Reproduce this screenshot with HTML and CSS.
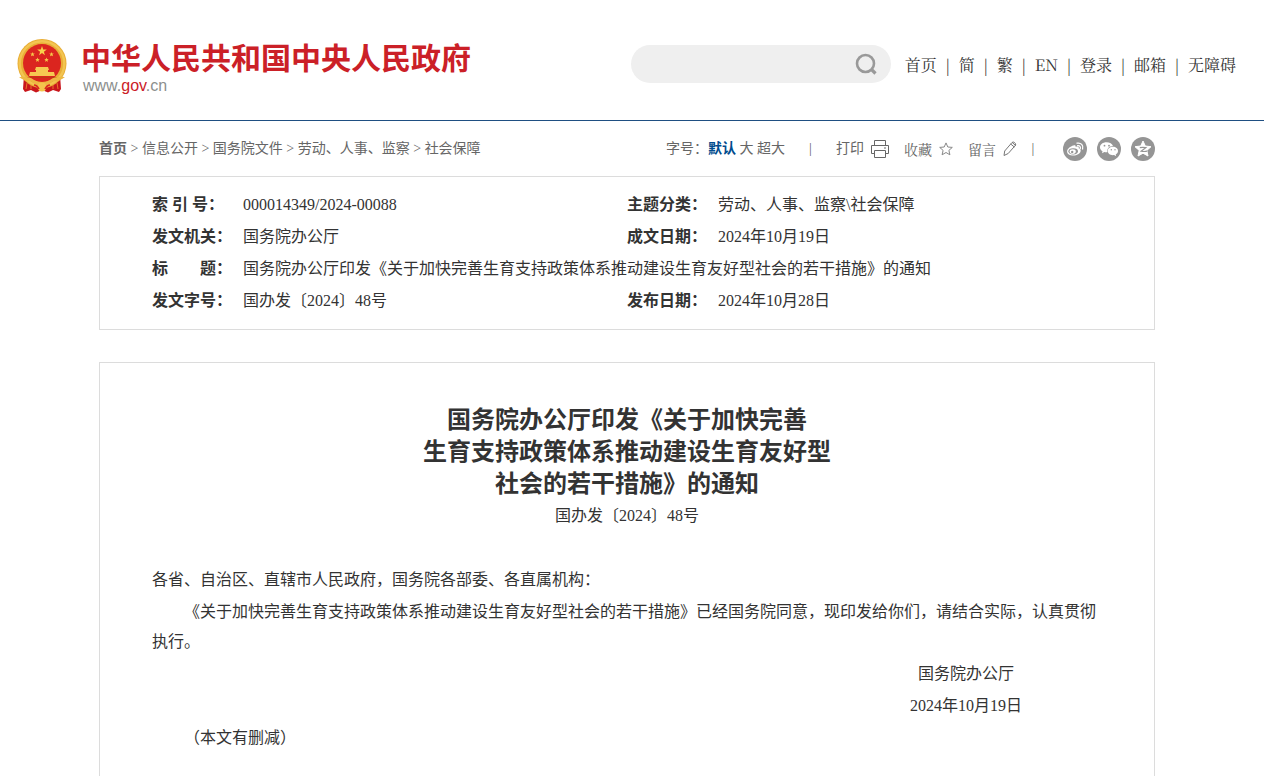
FILE: index.html
```html
<!DOCTYPE html>
<html lang="zh-CN">
<head>
<meta charset="utf-8">
<meta name="viewport" content="width=device-width, initial-scale=1">
<title>国务院办公厅印发《关于加快完善生育支持政策体系推动建设生育友好型社会的若干措施》的通知</title>
<link rel="stylesheet" href="styles.css">
</head>
<body>
<header class="header">
  <a class="brand" href="#">
    <svg class="emblem" viewBox="0 0 50 54" aria-hidden="true">
      <path d="M7 36 L6 50 L8 53 L14 51 L19 53.500 L25 51 L31 53.500 L36 51 L42 53 L44 50 L43 36Z" fill="#c9161c"/>
      <path d="M10 44 L9 50 M14 46 L14 50 M36 46 L36 50 M40 44 L41 50" stroke="#e8762a" stroke-width="1"/>
      <circle cx="25" cy="24.500" r="24.500" fill="#e9ae36"/>
      <circle cx="25" cy="24.500" r="22.300" fill="none" stroke="#f3c551" stroke-width="2.400"/>
      <circle cx="25" cy="24" r="19" fill="#db251f"/>
      <path d="M25 7l1.200 3.400 3.600.1-2.900 2.200 1 3.500-2.900-2.100-2.900 2.100 1-3.500-2.900-2.200 3.600-.1z" fill="#f8d34c"/>
      <g fill="#f5c84a">
        <path d="M15.500 13l.6 1.500 1.700.1-1.300 1 .5 1.700-1.500-.9-1.500.9.500-1.700-1.300-1 1.700-.1z"/>
        <path d="M34.500 13l.6 1.500 1.700.1-1.300 1 .5 1.700-1.500-.9-1.500.9.500-1.700-1.300-1 1.700-.1z"/>
        <path d="M20.500 18.500l.6 1.500 1.700.1-1.300 1 .5 1.700-1.500-.9-1.500.9.500-1.700-1.300-1 1.700-.1z"/>
        <path d="M29.500 18.500l.6 1.500 1.700.1-1.300 1 .5 1.700-1.500-.9-1.500.9.500-1.700-1.300-1 1.700-.1z"/>
      </g>
      <path d="M19 28h12l1 3H18zM19 31h12v3H19zM13 33h24l1 4H12z" fill="#f6c851"/>
      <path d="M10 38.500h30" stroke="#bc3b12"/>
      <path d="M2 38 Q12 37 17 41 Q25 46 33 41 Q38 37 48 38 Q42 43 36 42 Q33 44 30 47 Q25 51 20 47 Q17 44 14 42 Q8 43 2 38Z" fill="#edb843"/>
      <circle cx="25" cy="48" r="4.500" fill="#f4c44d"/>
      <path d="M17 46q3 0 5 4M33 46q-3 0-5 4" fill="none" stroke="#db251f" stroke-width="1.600"/>
    </svg>
    <span class="brand-text">
      <span class="brand-name">中华人民共和国中央人民政府</span>
      <span class="brand-url">www.<span class="brand-gov">gov</span>.cn</span>
    </span>
  </a>
  <div class="header-tools">
    <form class="search" role="search">
      <input class="search-input" type="search" aria-label="搜索">
      <button class="search-button" type="button" aria-label="搜索">
        <svg width="22" height="22" viewBox="0 0 22 22" fill="none" stroke="#999" stroke-width="2.600" aria-hidden="true"><circle cx="10.500" cy="10.500" r="8.500"/><path d="M16.500 16.500l4 4" stroke-width="3.200"/></svg>
      </button>
    </form>
    <nav class="top-nav">
      <a href="#">首页</a><span class="bar">|</span><a href="#">简</a><span class="bar">|</span><a href="#">繁</a><span class="bar">|</span><a href="#">EN</a><span class="bar">|</span><a href="#">登录</a><span class="bar">|</span><a href="#">邮箱</a><span class="bar">|</span><a href="#">无障碍</a>
    </nav>
  </div>
</header>

<main class="page">
  <div class="toolbar">
    <nav class="crumbs"><a class="home" href="#">首页</a> &gt; <a href="#">信息公开</a> &gt; <a href="#">国务院文件</a> &gt; <a href="#">劳动、人事、监察</a> &gt; <a href="#">社会保障</a></nav>
    <div class="tools">
      <div class="sizes">字号：<button class="size current" type="button">默认</button> <button class="size" type="button">大</button> <button class="size" type="button">超大</button></div>
      <span class="divider">|</span>
      <button class="tool print" type="button">打印
        <svg width="18" height="18" viewBox="0 0 18 18" fill="none" stroke="#666" aria-hidden="true"><path d="M3.500 5V.5h11V5M3.500 13.500h-3v-8h17v8h-3M3.500 10.500h11v7h-11zM13 8h2"/></svg>
      </button>
      <button class="tool serif" type="button">收藏
        <svg width="14" height="14" viewBox="0 0 14 14" fill="none" stroke="#888" aria-hidden="true"><path d="M7 .9l1.800 4.100 4.500.4-3.400 3 1 4.400L7 10.500l-3.900 2.300 1-4.400-3.400-3 4.500-.4z"/></svg>
      </button>
      <button class="tool serif" type="button">留言
        <svg width="14" height="16" viewBox="0 0 14 16" fill="none" stroke="#777" aria-hidden="true"><path d="M1 14.500l.7-4.500L9 1.500q1.200-1 2.500 0t1.200 2.500L5.200 12.500zM7.700 3l3.700 3.100M9.200 1.500l3.600 3"/></svg>
      </button>
      <span class="divider last">|</span>
      <div class="share">
        <a href="#" aria-label="微博"><svg width="24" height="24" viewBox="0 0 24 24" aria-hidden="true"><circle cx="12" cy="12" r="12" fill="#959595"/><path d="M10.500 8.500c1.200-.5 2.500-.2 2.200 1.400 2-.8 3.600-.3 3 1.400 1.600.5 2.300 1.500 1.900 3-.6 2.500-3.800 4.200-7.200 4.200-3.600 0-6.300-1.600-6.300-4.100 0-2.400 3.300-5.200 6.400-5.900z" fill="#fff"/><ellipse cx="10.200" cy="14.300" rx="4.800" ry="3.100" fill="#959595"/><ellipse cx="9.700" cy="14.600" rx="3.100" ry="2.400" fill="#fff"/><circle cx="9.200" cy="15" r="1.200" fill="#959595"/><path d="M14 6.200c4-.8 6.700 2 5.600 5.800M14.600 8.700c2.100-.3 3.200 1 2.700 2.900" fill="none" stroke="#fff" stroke-width="1.300" stroke-linecap="round"/></svg></a>
        <a href="#" aria-label="微信"><svg width="24" height="24" viewBox="0 0 24 24" aria-hidden="true"><circle cx="12" cy="12" r="12" fill="#959595"/><path d="M9.500 5.200c-3.700 0-6.500 2.200-6.500 5 0 1.700.9 3.100 2.500 4.100L5 16.200l2.400-1.200c1 .2 2 .3 3 .2-.7-3.300 1.900-6.100 5.600-6.100-.7-2.500-3.300-3.900-6.500-3.900z" fill="#fff"/><path d="M16 9.800c-3 0-5.300 1.900-5.300 4.200 0 2.500 2.600 4.600 6.400 4.100l2.100 1.100-.5-1.800c1.500-1 2.300-2.100 2.300-3.500 0-2.300-2.200-4.100-5-4.100z" fill="#fff"/><g fill="#959595"><circle cx="7.500" cy="8.700" r=".9"/><circle cx="12" cy="8.700" r=".9"/><circle cx="14.300" cy="12.800" r=".7"/><circle cx="18" cy="12.800" r=".7"/></g></svg></a>
        <a href="#" aria-label="QQ空间"><svg width="24" height="24" viewBox="0 0 24 24" aria-hidden="true"><circle cx="12" cy="12" r="12" fill="#959595"/><path d="M12 4l2.300 5 5.700.7-4.200 3.700 1.200 5.600-5-2.800L7 19l1.200-5.600L4 9.700 9.700 9z" fill="#fff" stroke="#fff" stroke-linejoin="round"/><path d="M8.800 10.700c2-.3 4-.3 6 0l-4.700 3.500c2 .4 4 .4 6 0" fill="none" stroke="#959595" stroke-width="1.200"/></svg></a>
      </div>
    </div>
  </div>

  <section class="card info">
    <table class="meta">
      <colgroup><col class="col-label"><col class="col-value"><col class="col-label"><col></colgroup>
      <tr><th scope="row">索 引 号：</th><td>000014349/2024-00088</td><th scope="row">主题分类：</th><td>劳动、人事、监察\社会保障</td></tr>
      <tr><th scope="row">发文机关：</th><td>国务院办公厅</td><th scope="row">成文日期：</th><td>2024年10月19日</td></tr>
      <tr><th scope="row">标　　题：</th><td colspan="3">国务院办公厅印发《关于加快完善生育支持政策体系推动建设生育友好型社会的若干措施》的通知</td></tr>
      <tr><th scope="row">发文字号：</th><td>国办发〔2024〕48号</td><th scope="row">发布日期：</th><td>2024年10月28日</td></tr>
    </table>
  </section>

  <article class="card article">
    <h1 class="title">国务院办公厅印发《关于加快完善<br>生育支持政策体系推动建设生育友好型<br>社会的若干措施》的通知</h1>
    <p class="number">国办发〔2024〕48号</p>
    <div class="content">
      <p>各省、自治区、直辖市人民政府，国务院各部委、各直属机构：</p>
      <p class="indent">《关于加快完善生育支持政策体系推动建设生育友好型社会的若干措施》已经国务院同意，现印发给你们，请结合实际，认真贯彻执行。</p>
      <div class="signature">
        <p>国务院办公厅</p>
        <p>2024年10月19日</p>
      </div>
      <p class="indent">（本文有删减）</p>
    </div>
  </article>
</main>
</body>
</html>
```
FILE: styles.css
```css
* {
  box-sizing: border-box;
}

body {
  margin: 0;
  background: #fff;
  color: #333;
  font-family: "Liberation Serif", "Noto Sans CJK SC", serif;
  font-size: 16px;
}

a {
  color: inherit;
  text-decoration: none;
}

button {
  margin: 0;
  padding: 0;
  border: 0;
  background: none;
  color: inherit;
  font: inherit;
  cursor: pointer;
}

svg {
  display: block;
  flex: none;
}

p,
h1 {
  margin: 0;
}

.header {
  display: flex;
  align-items: flex-start;
  justify-content: space-between;
  gap: 24px;
  padding: 36px 28px 24px 17px;
  border-bottom: 1px solid #1f4f82;
}

.brand {
  display: flex;
  align-items: center;
  gap: 14px;
  white-space: nowrap;
}

.emblem {
  width: 50px;
  height: 54px;
}

.brand-text {
  display: flex;
  flex-direction: column;
}

.brand-name {
  color: #cb2027;
  font: bold 30px/40px "Noto Sans CJK SC", sans-serif;
}

.brand-url {
  padding-left: 2px;
  color: #8c8f8e;
  font: 16px/20px "Liberation Sans", sans-serif;
}

.brand-gov {
  color: #cb2027;
}

.header-tools {
  display: flex;
  align-items: center;
  gap: 14px;
  padding-top: 9px;
}

.search {
  display: flex;
  align-items: center;
  width: 260px;
  height: 38px;
  padding: 0 14px 0 18px;
  border-radius: 19px;
  background: #efefef;
}

.search-input {
  flex: 1;
  min-width: 0;
  border: 0;
  outline: 0;
  background: none;
  font: inherit;
}

.top-nav {
  display: flex;
  padding-top: 2px;
  font-family: "Noto Serif CJK SC", "Noto Sans CJK SC", serif;
  line-height: 24px;
  white-space: nowrap;
}

.bar {
  width: 22px;
  text-align: center;
}

.page {
  max-width: 1066px;
  margin: 0 auto;
  padding-right: 10px;
}

.toolbar {
  display: flex;
  align-items: center;
  justify-content: space-between;
  height: 55px;
  color: #666;
  font-size: 14px;
  line-height: 20px;
  white-space: nowrap;
}

.home {
  font-weight: bold;
}

.tools,
.share,
.tool {
  display: flex;
  align-items: center;
}

.size.current {
  color: #004b8d;
  font-weight: bold;
}

.divider {
  width: 51px;
  text-align: center;
}

.divider.last {
  width: 32px;
  margin-right: 14px;
}

.tool {
  gap: 7px;
  margin-right: 15px;
}

.tool.serif {
  font-family: "Noto Serif CJK SC", "Noto Sans CJK SC", serif;
}

.tool.serif:nth-last-of-type(1) {
  margin-right: 0;
}

.share {
  gap: 10px;
}

.card {
  border: 1px solid #dcdcdc;
}

.info {
  padding: 12px 52px;
}

.meta {
  width: 100%;
  border-collapse: collapse;
  table-layout: fixed;
}

.col-label {
  width: 91px;
}

.col-value {
  width: 384px;
}

.meta th,
.meta td {
  height: 32px;
  padding: 0;
  line-height: 32px;
  text-align: left;
  white-space: nowrap;
}

.article {
  margin-top: 32px;
  padding: 41px 52px 80px;
}

.title {
  font-size: 24px;
  line-height: 32px;
  text-align: center;
}

.number {
  line-height: 32px;
  text-align: center;
}

.content {
  display: flex;
  flex-direction: column;
  gap: 2px;
  margin-top: 33px;
  line-height: 30px;
}

.indent {
  text-indent: 32px;
}

.signature {
  display: flex;
  flex-direction: column;
  gap: 2px;
  align-self: flex-end;
  margin-right: 80px;
  text-align: center;
}
```
